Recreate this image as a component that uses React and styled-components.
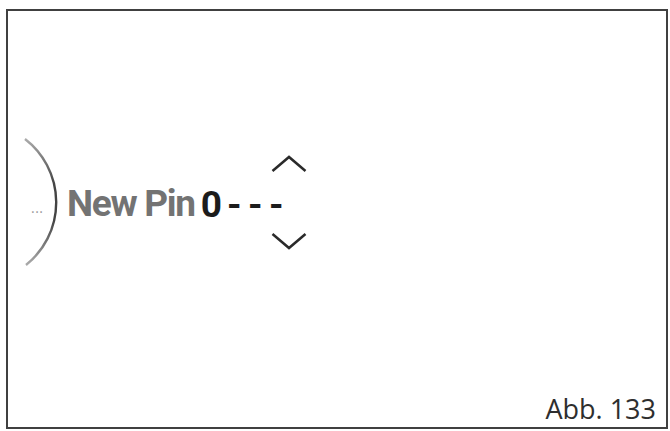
import React from 'react'
import styled, { createGlobalStyle } from 'styled-components'

const GlobalStyle = createGlobalStyle`
    html, body {
        margin: 0;
        padding: 0;
        background: #fff;
    }
    body {
        font-family: Roboto, "Liberation Sans", sans-serif;
    }
`

const Frame = styled.div`
    box-sizing: border-box;
    width: 662px;
    height: 420px;
    margin: 9px 0 0 6px;
    border: 2px solid #404040;
    display: flex;
    flex-direction: column;
    padding: 127px 10px 2px 0;
`

const PinRow = styled.div`
    display: flex;
    align-items: center;
`

const Dial = styled.div`
    position: relative;
    width: 52px;
    height: 128px;
    display: flex;
    align-items: center;
    padding: 10px 0 0 23px;
    box-sizing: border-box;

    svg {
        position: absolute;
        top: 0;
        left: 0;
    }
`

const Dots = styled.span`
    font-family: "Open Sans", sans-serif;
    font-size: 14px;
    color: #9a9a9a;
    letter-spacing: 0.5px;
`

const Label = styled.span`
    margin: 3px 0 0 7px;
    font-size: 37px;
    font-weight: 700;
    letter-spacing: -1.3px;
    color: #737373;
    line-height: 1;
`

const Entry = styled.div`
    display: grid;
    grid-template-rows: auto auto auto;
    margin-left: 6px;
`

const Chevron = styled.svg`
    display: block;
    margin-left: ${p => p.$offset}px;
`

const Digits = styled.div`
    display: flex;
    margin: 13px 0 9px;
`

const Digit = styled.span`
    width: 21px;
    margin-right: ${p => (p.$first ? 2 : 0)}px;
    text-align: center;
    font-size: 37px;
    font-weight: 700;
    line-height: 1;
    color: #1c1c1c;
`

const Caption = styled.div`
    margin-top: auto;
    align-self: flex-end;
    font-family: "Open Sans", sans-serif;
    font-size: 27px;
    color: #2e2e2e;
    line-height: 1.2;
`

function Arc() {
    return (
        <svg width="52" height="128" viewBox="0 0 52 128">
            <defs>
                <linearGradient id="arcFade" x1="0" y1="0" x2="0" y2="1">
                    <stop offset="0" stopColor="#444" stopOpacity="0.45" />
                    <stop offset="0.35" stopColor="#444" stopOpacity="1" />
                    <stop offset="0.65" stopColor="#444" stopOpacity="1" />
                    <stop offset="1" stopColor="#444" stopOpacity="0.45" />
                </linearGradient>
            </defs>
            <path d="M17 1 A80 80 0 0 1 18 127" fill="none" stroke="url(#arcFade)" strokeWidth="2.4" />
        </svg>
    )
}

function Caret({ down }) {
    return (
        <Chevron $offset={70} width="36" height="18" viewBox="0 0 36 18">
            <path
                d={down ? 'M1.5 2 L18 16 L34.5 2' : 'M1.5 16 L18 2 L34.5 16'}
                fill="none"
                stroke="#2a2a2a"
                strokeWidth="2.5"
            />
        </Chevron>
    )
}

export default function App() {
    const digits = ['0', '-', '-', '-']
    return (
        <>
            <GlobalStyle />
            <Frame>
                <PinRow>
                    <Dial>
                        <Arc />
                        <Dots>...</Dots>
                    </Dial>
                    <Label>New Pin</Label>
                    <Entry>
                        <Caret />
                        <Digits>
                            {digits.map((d, i) => (
                                <Digit key={i} $first={i === 0}>{d}</Digit>
                            ))}
                        </Digits>
                        <Caret down />
                    </Entry>
                </PinRow>
                <Caption>Abb. 133</Caption>
            </Frame>
        </>
    )
}
